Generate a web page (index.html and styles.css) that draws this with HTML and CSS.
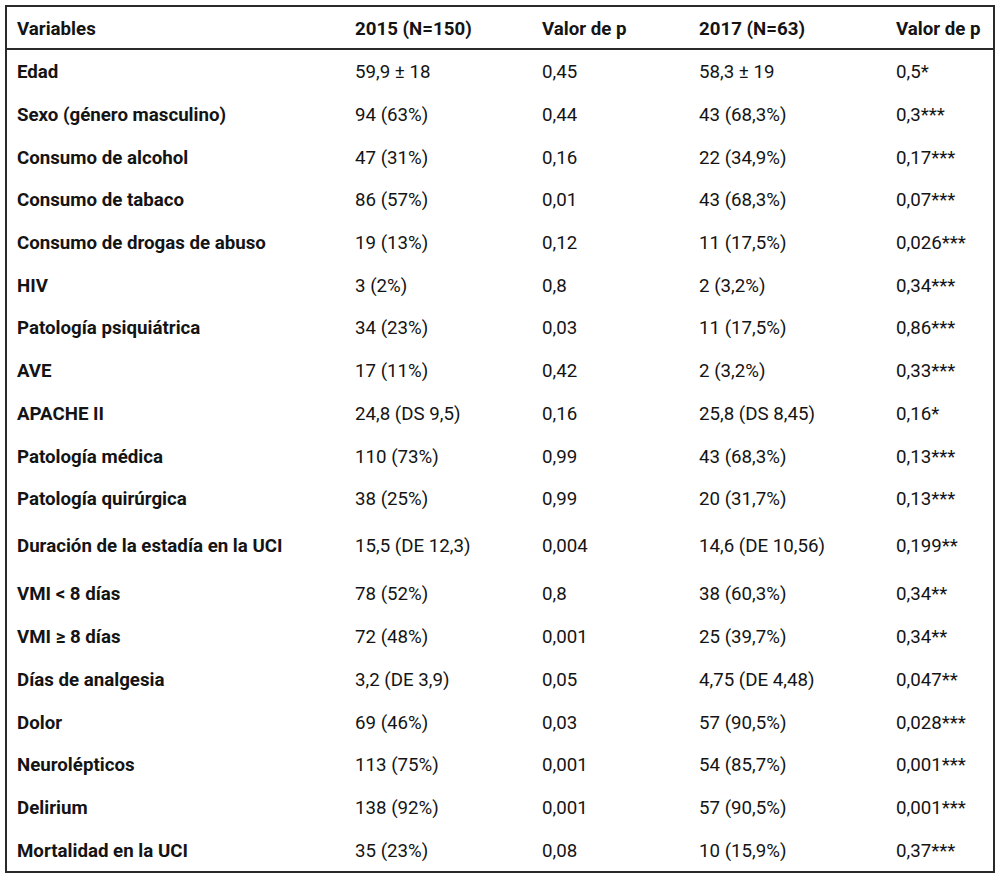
FILE: index.html
```html
<!DOCTYPE html>
<html lang="es">
<head>
<meta charset="utf-8">
<title>Tabla</title>
<link rel="stylesheet" href="styles.css">
</head>
<body>
<table class="data">
  <colgroup>
    <col class="c1"><col class="c2"><col class="c3"><col class="c4"><col class="c5">
  </colgroup>
  <thead>
    <tr><th>Variables</th><th>2015 (N=150)</th><th>Valor de p</th><th>2017 (N=63)</th><th>Valor de p</th></tr>
  </thead>
  <tbody>
    <tr><th>Edad</th><td>59,9 ± 18</td><td>0,45</td><td>58,3 ± 19</td><td>0,5*</td></tr>
    <tr><th>Sexo (género masculino)</th><td>94 (63%)</td><td>0,44</td><td>43 (68,3%)</td><td>0,3***</td></tr>
    <tr><th>Consumo de alcohol</th><td>47 (31%)</td><td>0,16</td><td>22 (34,9%)</td><td>0,17***</td></tr>
    <tr><th>Consumo de tabaco</th><td>86 (57%)</td><td>0,01</td><td>43 (68,3%)</td><td>0,07***</td></tr>
    <tr><th>Consumo de drogas de abuso</th><td>19 (13%)</td><td>0,12</td><td>11 (17,5%)</td><td>0,026***</td></tr>
    <tr><th>HIV</th><td>3 (2%)</td><td>0,8</td><td>2 (3,2%)</td><td>0,34***</td></tr>
    <tr><th>Patología psiquiátrica</th><td>34 (23%)</td><td>0,03</td><td>11 (17,5%)</td><td>0,86***</td></tr>
    <tr><th>AVE</th><td>17 (11%)</td><td>0,42</td><td>2 (3,2%)</td><td>0,33***</td></tr>
    <tr><th>APACHE II</th><td>24,8 (DS 9,5)</td><td>0,16</td><td>25,8 (DS 8,45)</td><td>0,16*</td></tr>
    <tr><th>Patología médica</th><td>110 (73%)</td><td>0,99</td><td>43 (68,3%)</td><td>0,13***</td></tr>
    <tr><th>Patología quirúrgica</th><td>38 (25%)</td><td>0,99</td><td>20 (31,7%)</td><td>0,13***</td></tr>
    <tr class="tall"><th>Duración de la estadía en la UCI</th><td>15,5 (DE 12,3)</td><td>0,004</td><td>14,6 (DE 10,56)</td><td>0,199**</td></tr>
    <tr class="mid"><th>VMI &lt; 8 días</th><td>78 (52%)</td><td>0,8</td><td>38 (60,3%)</td><td>0,34**</td></tr>
    <tr><th>VMI ≥ 8 días</th><td>72 (48%)</td><td>0,001</td><td>25 (39,7%)</td><td>0,34**</td></tr>
    <tr><th>Días de analgesia</th><td>3,2 (DE 3,9)</td><td>0,05</td><td>4,75 (DE 4,48)</td><td>0,047**</td></tr>
    <tr><th>Dolor</th><td>69 (46%)</td><td>0,03</td><td>57 (90,5%)</td><td>0,028***</td></tr>
    <tr><th>Neurolépticos</th><td>113 (75%)</td><td>0,001</td><td>54 (85,7%)</td><td>0,001***</td></tr>
    <tr><th>Delirium</th><td>138 (92%)</td><td>0,001</td><td>57 (90,5%)</td><td>0,001***</td></tr>
    <tr><th>Mortalidad en la UCI</th><td>35 (23%)</td><td>0,08</td><td>10 (15,9%)</td><td>0,37***</td></tr>
  </tbody>
</table>
</body>
</html>
```

FILE: styles.css
```css
html, body {
  margin: 0;
  padding: 0;
  background: #ffffff;
}

body {
  padding: 5px;
  font-family: Roboto, "Liberation Sans", Arial, sans-serif;
  font-size: 18.7px;
  color: #141414;
}

.data {
  width: 990px;
  table-layout: fixed;
  border-collapse: separate;
  border-spacing: 0;
  border: 2px solid #2a2a2a;
}

.c1 { width: 338px; }
.c2 { width: 187px; }
.c3 { width: 157px; }
.c4 { width: 197px; }
.c5 { width: 107px; }

.data th,
.data td {
  padding: 2px 10px 0;
  text-align: left;
  vertical-align: middle;
  white-space: nowrap;
  line-height: 22px;
}

.data th {
  font-weight: 700;
}

.data td {
  font-weight: 400;
}

.data thead tr {
  height: 43px;
}

.data thead th {
  border-bottom: 2px solid #2a2a2a;
}

.data tbody tr {
  height: 42.7px;
}

.data tbody tr.tall {
  height: 51px;
}

.data tbody tr.mid {
  height: 44.5px;
}
```
